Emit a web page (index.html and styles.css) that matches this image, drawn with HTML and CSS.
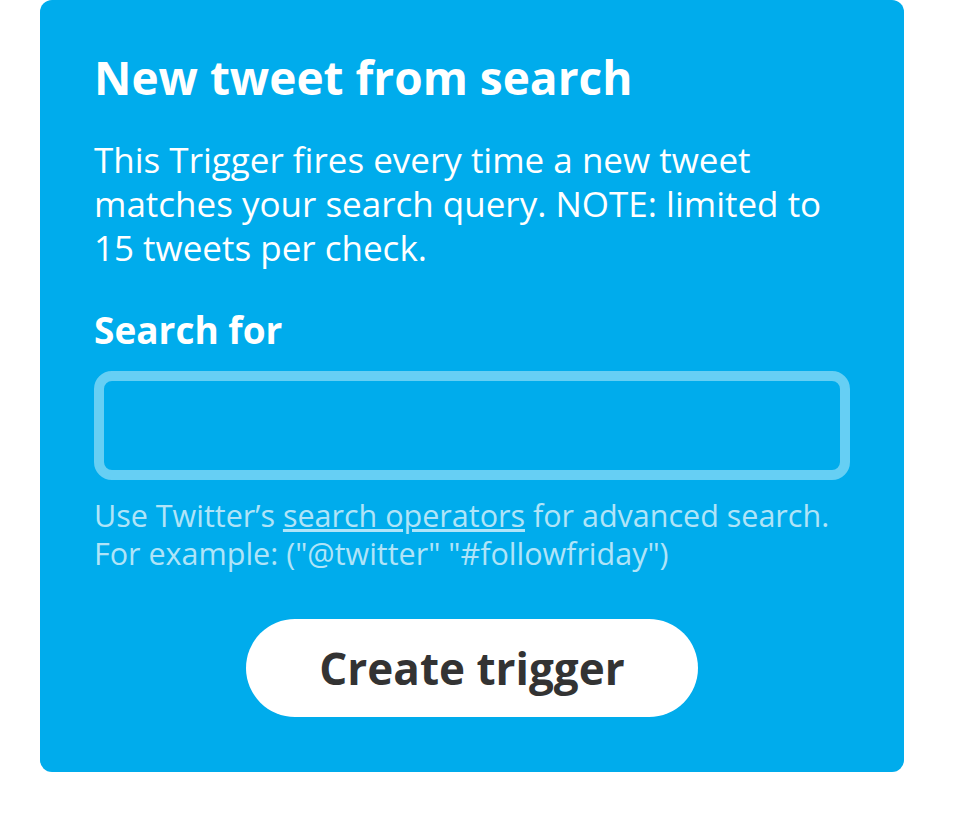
FILE: index.html
```html
<!DOCTYPE html>
<html lang="en">
<head>
    <meta charset="UTF-8">
    <meta name="viewport" content="width=device-width, initial-scale=1.0">
    <title>New tweet from search</title>
<link rel="stylesheet" href="styles.css">
</head>
<body>
    <div class="trigger-card">
        <h1 class="title">New tweet from search</h1>
        <p class="desc">This Trigger fires every time a new tweet matches your search query. NOTE: limited to 15 tweets per check.</p>
        <label class="field-label" for="query">Search for</label>
        <input class="field-input" id="query" type="text">
        <p class="helper">Use Twitter’s <a href="#">search operators</a> for advanced search. For example: ("@twitter" "#followfriday")</p>
        <div class="actions">
            <button class="create-btn">Create trigger</button>
        </div>
    </div>
</body>
</html>
```

FILE: styles.css
```css
*{
    margin: 0;
    padding: 0;
    box-sizing: border-box;
}
body{
    background: #fff;
    font-family: "Open Sans", "Noto Sans", sans-serif;
}
.trigger-card{
    width: 864px;
    margin-left: 40px;
    background: #00acec;
    border-radius: 12px;
    padding: 47px 54px 55px;
    color: #fff;
}
.title{
    font-size: 46px;
    font-weight: 700;
    line-height: 60px;
}
.desc{
    margin-top: 31px;
    font-size: 35px;
    line-height: 44px;
}
.field-label{
    display: block;
    margin-top: 35px;
    font-size: 37px;
    font-weight: 700;
    line-height: 50px;
}
.field-input{
    display: block;
    width: 100%;
    height: 109px;
    margin-top: 16px;
    background: transparent;
    border: 10px solid #66cff4;
    border-radius: 18px;
    outline: none;
}
.helper{
    margin-top: 16px;
    font-size: 30.5px;
    line-height: 38px;
    color: #b0e4f8;
}
.helper a{
    color: inherit;
}
.actions{
    display: flex;
    justify-content: center;
    margin-top: 47px;
}
.create-btn{
    width: 452px;
    height: 98px;
    border: none;
    border-radius: 49px;
    background: #fff;
    color: #333;
    font-family: inherit;
    font-size: 44px;
    font-weight: 700;
}
```
